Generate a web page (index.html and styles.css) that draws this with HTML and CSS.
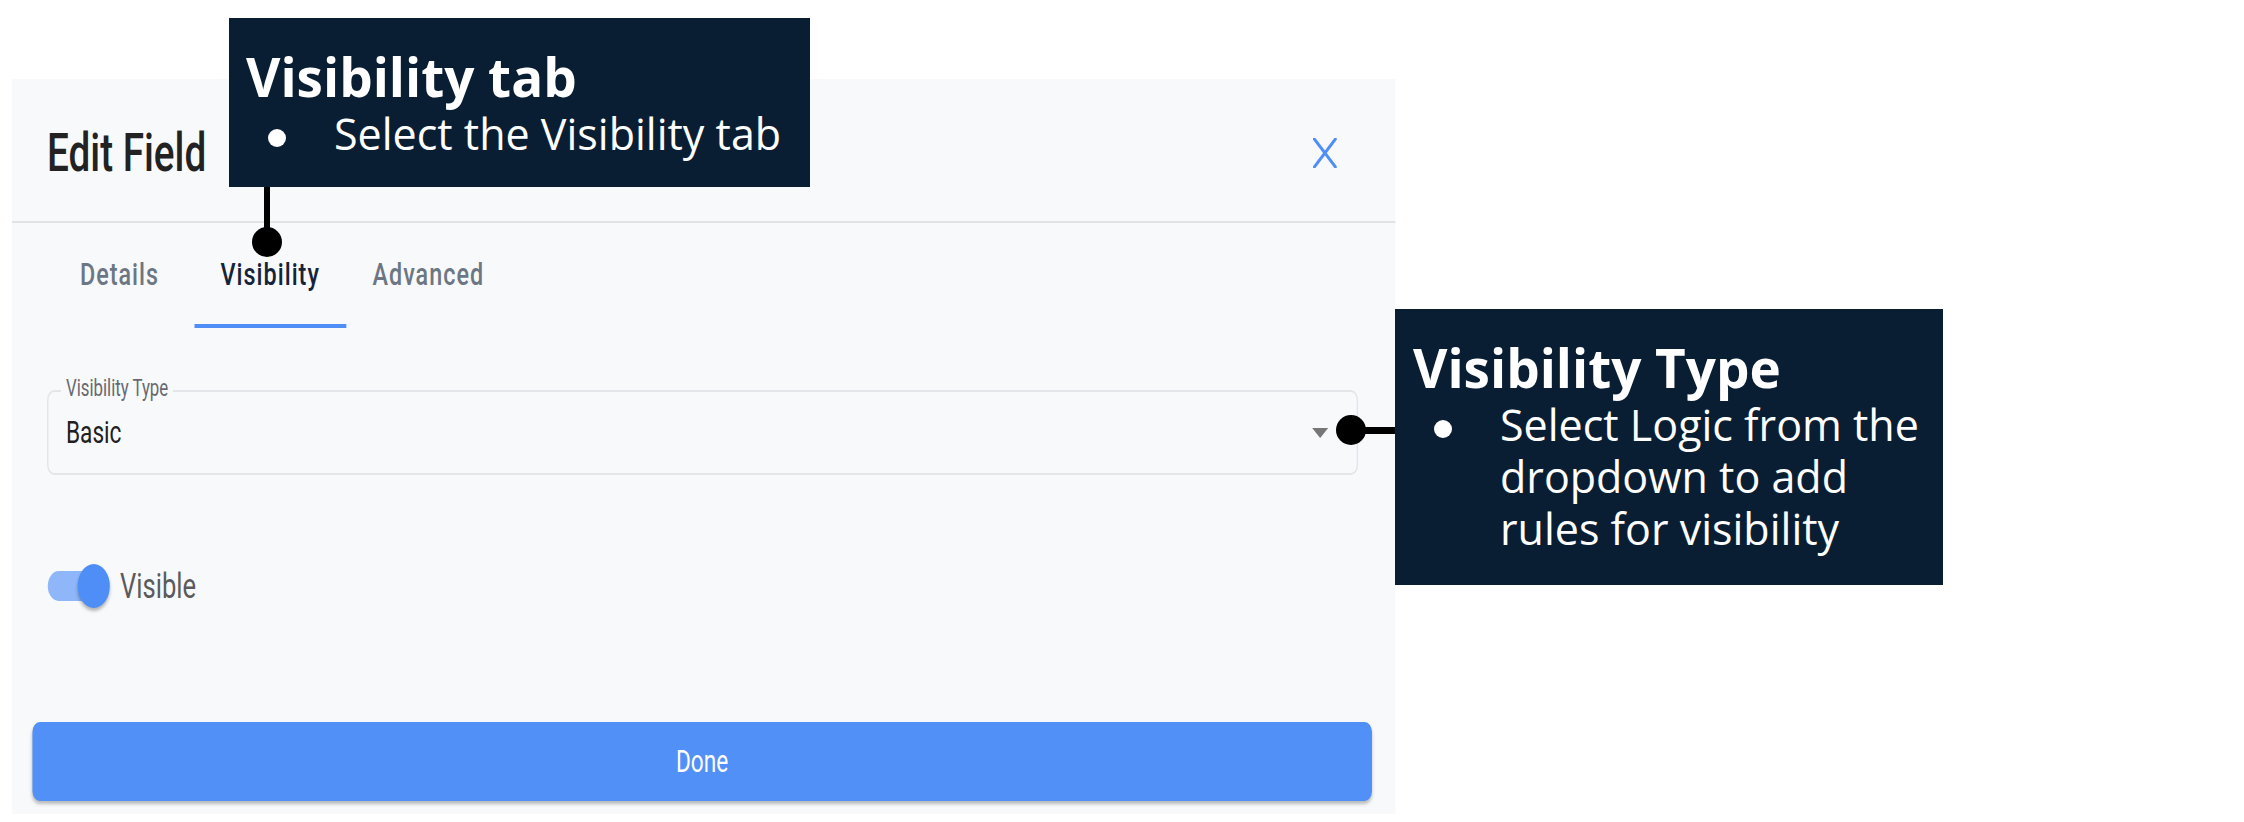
FILE: index.html
```html
<!DOCTYPE html>
<html lang="en">
<head>
<meta charset="utf-8">
<title>Edit Field – Visibility</title>
<link rel="stylesheet" href="styles.css">
</head>
<body>
<div class="stage">
  <section class="panel">
    <header class="panel-head">
      <h1 class="panel-title">Edit Field</h1>
      <button class="close" aria-label="Close">
        <svg class="close-icon" width="33" height="30" viewBox="0 0 33 30"><path d="M2 1 L31 29 M31 1 L2 29" stroke="#4f8ef7" stroke-width="3.6" stroke-linecap="round" fill="none"/></svg>
      </button>
    </header>
    <nav class="tabs">
      <span class="tab tab-first">Details</span>
      <span class="tab tab-active">Visibility</span>
      <span class="tab">Advanced</span>
    </nav>
    <div class="panel-body">
      <fieldset class="select">
        <legend class="select-label">Visibility Type</legend>
        <div class="select-row">
          <span class="select-value">Basic</span>
          <span class="caret"></span>
        </div>
      </fieldset>
      <label class="switch-row">
        <span class="switch"><span class="switch-track"></span><span class="switch-thumb"></span></span>
        <span class="switch-text">Visible</span>
      </label>
    </div>
    <div class="panel-foot">
      <button class="done">Done</button>
    </div>
  </section>

  <div class="lead lead-tab-line"></div>
  <div class="lead-dot lead-tab-dot"></div>
  <div class="callout callout-tab">
    <h2 class="callout-title">Visibility tab</h2>
    <ul class="callout-list">
      <li class="callout-item"><span class="callout-text"><span class="callout-line">Select the Visibility tab</span></span></li>
    </ul>
  </div>

  <div class="lead lead-type-line"></div>
  <div class="lead-dot lead-type-dot"></div>
  <div class="callout callout-type">
    <h2 class="callout-title">Visibility Type</h2>
    <ul class="callout-list">
      <li class="callout-item"><span class="callout-text"><span class="callout-line">Select Logic from the</span><span class="callout-line">dropdown to add</span><span class="callout-line">rules for visibility</span></span></li>
    </ul>
  </div>
</div>
</body>
</html>
```

FILE: styles.css
```css
html, body {
  margin: 0;
  padding: 0;
  background: #ffffff;
}

.stage {
  position: relative;
  width: 2244px;
  height: 822px;
  box-sizing: border-box;
  padding: 79px 0 0 12px;
  overflow: hidden;
}

/* The UI capture is horizontally compressed; build it at natural size and squeeze it */
.panel {
  width: 1894.5px;
  height: 735px;
  box-sizing: border-box;
  background: #f8f9fb;
  transform: scaleX(0.73);
  transform-origin: 0 0;
  font-family: Roboto, "Liberation Sans", sans-serif;
  display: flex;
  flex-direction: column;
}

.panel-head {
  box-sizing: border-box;
  height: 144px;
  padding: 6px 79.5px 0 48px;
  border-bottom: 2px solid #e1e3e7;
  display: flex;
  align-items: center;
  justify-content: space-between;
}

.panel-title {
  margin: 0;
  font-size: 53px;
  line-height: 62px;
  font-weight: 500;
  color: #222222;
}

.close {
  border: 0;
  background: none;
  padding: 0;
  display: flex;
}

.close-icon {
  display: block;
}

.tabs {
  display: flex;
  height: 105px;
  padding-left: 57px;
}

.tab {
  box-sizing: border-box;
  height: 105px;
  padding: 33px 36px 0;
  font-size: 32px;
  line-height: 37.5px;
  font-weight: 500;
  letter-spacing: 1.4px;
  color: #6c7783;
  border-bottom: 4px solid transparent;
}

.tab-first {
  margin-right: 12px;
}

.tab-active {
  color: #15243a;
  border-bottom-color: #4f8ef7;
}

.panel-body {
  padding: 50px 50.5px 0 48px;
  display: flex;
  flex-direction: column;
}

.select {
  margin: 0;
  box-sizing: border-box;
  height: 97px;
  padding: 0 39px 11px 24px;
  border: 2px solid #e3e5e9;
  border-radius: 10px;
  min-width: 0;
}

.select-label {
  margin-left: -7px;
  padding: 0 7px 4px;
  font-size: 23px;
  line-height: 22px;
  color: #666a70;
}

.select-row {
  height: 58px;
  display: flex;
  align-items: center;
  justify-content: space-between;
}

.select-value {
  font-size: 31px;
  line-height: 36px;
  color: #212121;
}

.caret {
  width: 0;
  height: 0;
  border-left: 11px solid transparent;
  border-right: 11px solid transparent;
  border-top: 10px solid #777777;
}

.switch-row {
  margin-top: 89px;
  display: flex;
  align-items: center;
  gap: 14px;
  height: 44px;
}

.switch {
  position: relative;
  width: 86px;
  height: 44px;
  flex: none;
}

.switch-track {
  position: absolute;
  left: 1px;
  top: 7px;
  width: 78px;
  height: 30px;
  border-radius: 15px;
  background: #8fb6f8;
}

.switch-thumb {
  position: absolute;
  right: 0;
  top: 0;
  width: 44px;
  height: 44px;
  border-radius: 50%;
  background: #4f8ef7;
  box-shadow: 0 3px 4px rgba(0, 0, 0, 0.28);
}

.switch-text {
  font-size: 35px;
  line-height: 41px;
  color: #5b5b5b;
}

.panel-foot {
  margin-top: 114px;
  padding: 0 31.5px 0 27.5px;
}

.done {
  display: block;
  width: 100%;
  height: 79px;
  border: 0;
  border-radius: 10px;
  background: #5190f6;
  color: #ffffff;
  font-family: Roboto, "Liberation Sans", sans-serif;
  font-size: 31px;
  line-height: 36px;
  box-shadow: 0 3px 4px rgba(0, 0, 0, 0.25);
}

/* Annotation callouts (overlays) */
.callout {
  position: absolute;
  box-sizing: border-box;
  background: #0a1e33;
  color: #ffffff;
  font-family: "Open Sans", "Liberation Sans", sans-serif;
  padding-top: 28px;
}

.callout-tab {
  left: 229px;
  top: 18px;
  width: 581px;
  height: 169px;
  padding-left: 17px;
}

.callout-type {
  left: 1395px;
  top: 309px;
  width: 548px;
  height: 276px;
  padding-left: 18px;
}

.callout-title {
  margin: 0;
  font-size: 53px;
  line-height: 62px;
  font-weight: 700;
}

.callout-list {
  margin: 0;
  padding: 0;
  list-style: none;
}

.callout-item {
  display: flex;
  align-items: flex-start;
  font-size: 43px;
  line-height: 52px;
  white-space: nowrap;
}

.callout-item::before {
  content: "";
  flex: none;
  width: 18px;
  height: 18px;
  border-radius: 50%;
  background: #ffffff;
  margin: 21px 48px 0 22px;
}

.callout-type .callout-item::before {
  margin-left: 21px;
}

.callout-text {
  display: flex;
  flex-direction: column;
}

.callout-line {
  display: block;
  height: 52px;
}

.lead {
  position: absolute;
  background: #000000;
}

.lead-dot {
  position: absolute;
  width: 30px;
  height: 30px;
  border-radius: 50%;
  background: #000000;
}

.lead-tab-line {
  left: 264px;
  top: 187px;
  width: 6px;
  height: 55px;
}

.lead-tab-dot {
  left: 252px;
  top: 227px;
}

.lead-type-line {
  left: 1351px;
  top: 427px;
  width: 78px;
  height: 7px;
}

.lead-type-dot {
  left: 1336px;
  top: 415px;
}
```
